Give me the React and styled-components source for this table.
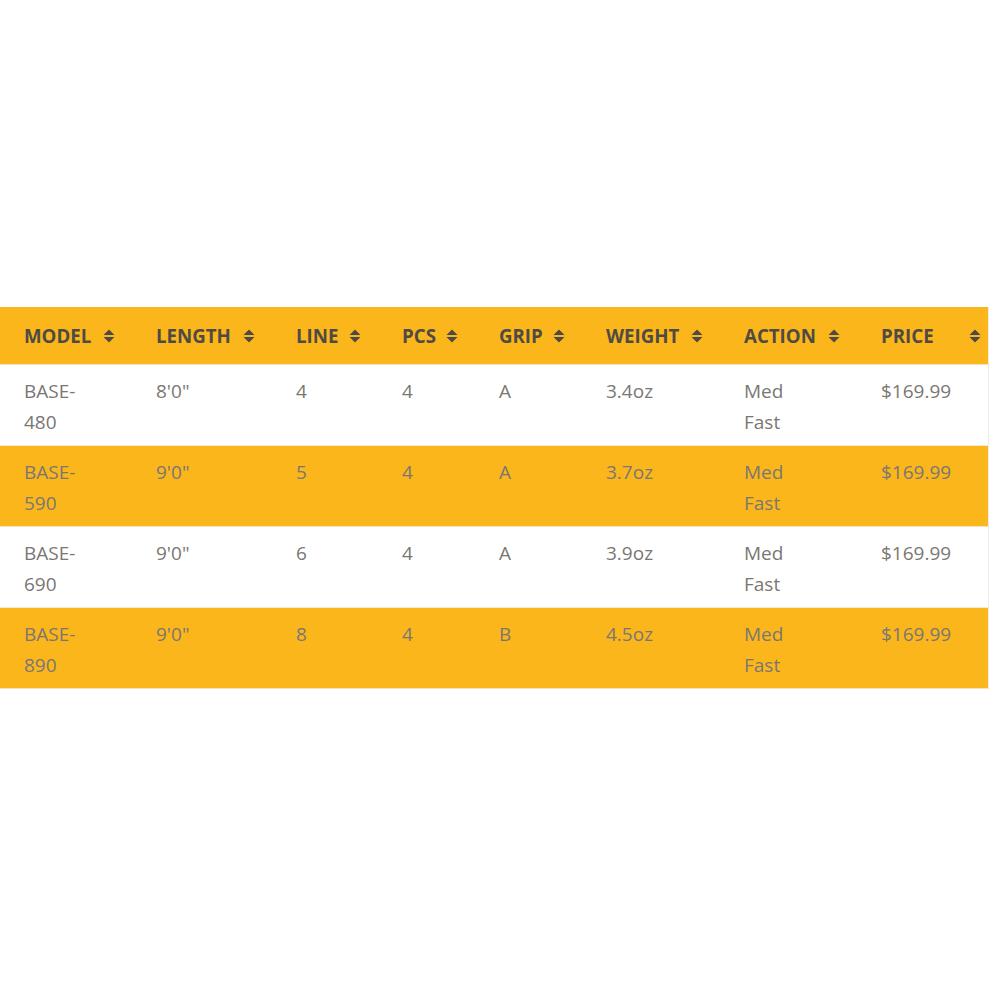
import React from 'react';
import styled, { createGlobalStyle } from 'styled-components';

const GlobalStyle = createGlobalStyle`
    body {
        margin: 0;
        background: #ffffff;
        font-family: "Open Sans", "Liberation Sans", sans-serif;
    }
`;

const columns = [
    { key: 'model', label: 'MODEL', width: 132 },
    { key: 'length', label: 'LENGTH', width: 140 },
    { key: 'line', label: 'LINE', width: 106 },
    { key: 'pcs', label: 'PCS', width: 97 },
    { key: 'grip', label: 'GRIP', width: 107 },
    { key: 'weight', label: 'WEIGHT', width: 138 },
    { key: 'action', label: 'ACTION', width: 137 },
    { key: 'price', label: 'PRICE', width: 131 },
];

const rods = [
    { model: 'BASE-480', length: '8\'0"', line: '4', pcs: '4', grip: 'A', weight: '3.4oz', action: 'Med Fast', price: '$169.99' },
    { model: 'BASE-590', length: '9\'0"', line: '5', pcs: '4', grip: 'A', weight: '3.7oz', action: 'Med Fast', price: '$169.99' },
    { model: 'BASE-690', length: '9\'0"', line: '6', pcs: '4', grip: 'A', weight: '3.9oz', action: 'Med Fast', price: '$169.99' },
    { model: 'BASE-890', length: '9\'0"', line: '8', pcs: '4', grip: 'B', weight: '4.5oz', action: 'Med Fast', price: '$169.99' },
];

const SortIcon = () => (
    <svg width="12" height="14" viewBox="0 0 12 14">
        <path d="M6 0.5 L11.5 6 L0.5 6 Z" fill="#4d4a45" />
        <path d="M0.5 8 L11.5 8 L6 13.5 Z" fill="#4d4a45" />
    </svg>
);

export default function App() {
    return (
        <>
            <GlobalStyle />
            <Page>
                <Table>
                    <colgroup>
                        {columns.map(c => <col key={c.key} style={{ width: c.width }} />)}
                    </colgroup>
                    <thead>
                        <tr>
                            {columns.map((c, i) => (
                                <HeadCell key={c.key}>
                                    <HeadInner last={i === columns.length - 1}>
                                        <span>{c.label}</span>
                                        <SortIcon />
                                    </HeadInner>
                                </HeadCell>
                            ))}
                        </tr>
                    </thead>
                    <tbody>
                        {rods.map((rod, i) => (
                            <Row key={rod.model} striped={i % 2 === 1}>
                                {columns.map(c => (
                                    <Cell key={c.key}>{rod[c.key]}</Cell>
                                ))}
                            </Row>
                        ))}
                    </tbody>
                </Table>
            </Page>
        </>
    );
}

const Page = styled.div`
    padding-top: 307px;
    width: 1000px;
`;

const Table = styled.table`
    width: 988px;
    table-layout: fixed;
    border-collapse: collapse;
    border-right: 1px solid #ececec;
`;

const HeadCell = styled.th`
    background-color: #fbb61c;
    padding: 0 0 0 24px;
    height: 57px;
    text-align: left;
    border-bottom: 1px solid #f6e3b6;
`;

const HeadInner = styled.div`
    display: flex;
    align-items: center;
    justify-content: space-between;
    padding-right: ${p => (p.last ? '7px' : '17px')};
    font-size: 18.7px;
    font-weight: 700;
    color: #4f4b44;
    line-height: 22px;

    svg {
        flex-shrink: 0;
    }
`;

const Row = styled.tr`
    background-color: ${p => (p.striped ? '#fbb61c' : '#ffffff')};
    border-bottom: 1px solid ${p => (p.striped ? '#f6e3b6' : '#f3ead2')};
`;

const Cell = styled.td`
    vertical-align: top;
    padding: 11px 36px 7px 24px;
    font-size: 19px;
    line-height: 31px;
    color: #7a7773;
    height: 62px;
`;
